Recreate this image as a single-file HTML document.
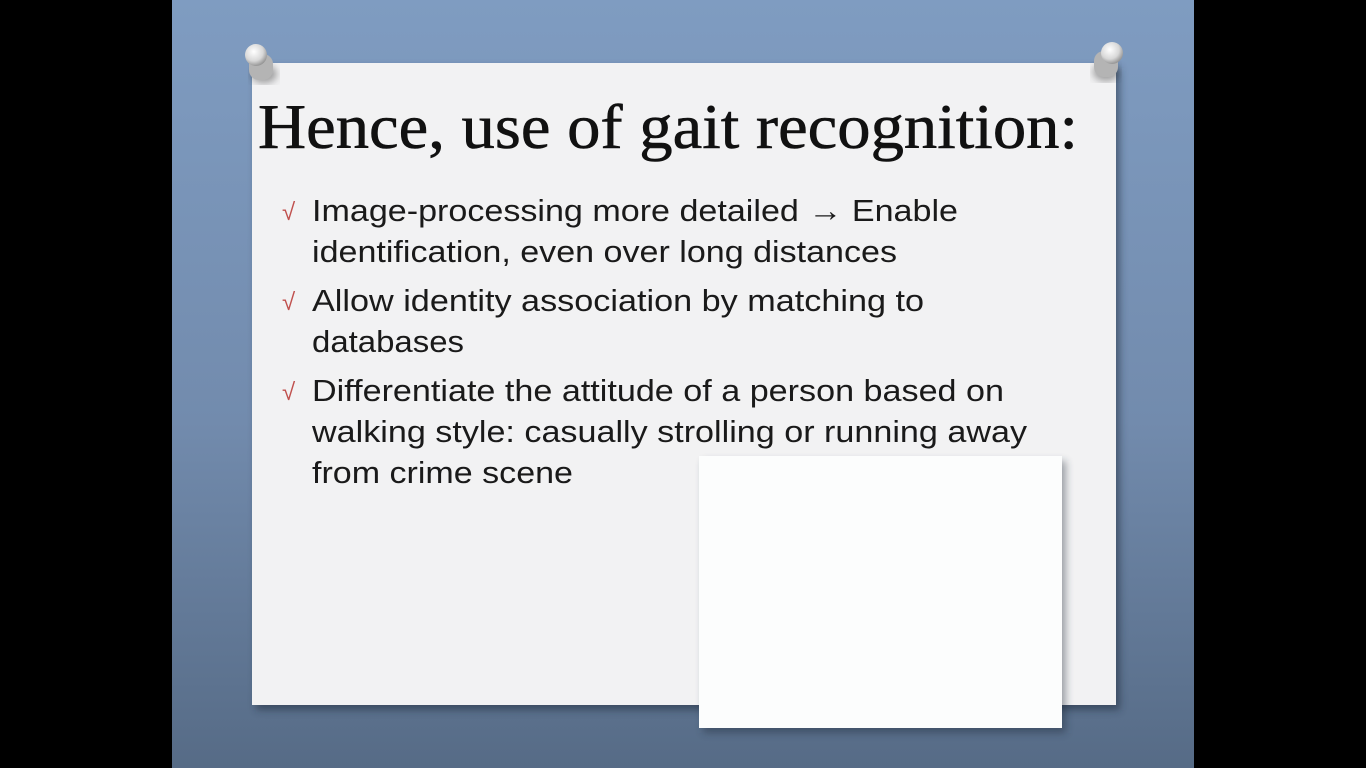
<!DOCTYPE html>
<html><head><meta charset="utf-8"><style>
html,body{margin:0;padding:0;background:#000;width:1366px;height:768px;overflow:hidden}
</style></head><body>
<svg width="1366" height="768" xmlns="http://www.w3.org/2000/svg" style="position:absolute;left:0;top:0">
<defs>
<linearGradient id="bg" x1="0" y1="0" x2="0" y2="1">
<stop offset="0" stop-color="#7f9cc1"/><stop offset="0.55" stop-color="#728bad"/><stop offset="1" stop-color="#566b86"/>
</linearGradient>
<filter id="sh" x="-10%" y="-10%" width="120%" height="120%"><feGaussianBlur stdDeviation="4"/></filter>
<radialGradient id="pin" cx="0.4" cy="0.35" r="0.7"><stop offset="0" stop-color="#ffffff"/><stop offset="0.6" stop-color="#d8d8d8"/><stop offset="1" stop-color="#8a8a8a"/></radialGradient>
</defs>
<rect x="172" y="0" width="1022" height="768" fill="url(#bg)"/>
<rect x="256" y="68" width="864" height="642" fill="#1a2535" opacity="0.5" filter="url(#sh)"/>
<rect x="252" y="63" width="864" height="642" fill="#f2f2f3"/>
<rect x="703" y="461" width="363" height="272" fill="#1a2535" opacity="0.4" filter="url(#sh)"/>
<rect x="699" y="456" width="363" height="272" fill="#fcfdfd"/>
<g>
<ellipse cx="264" cy="74" rx="13" ry="9" fill="#333" opacity="0.45" filter="url(#sh)"/>
<rect x="249" y="54" width="24" height="26" rx="10" fill="#b4b4b4"/>
<circle cx="256" cy="55" r="11" fill="url(#pin)"/>
<ellipse cx="1106" cy="72" rx="13" ry="9" fill="#333" opacity="0.45" filter="url(#sh)"/>
<rect x="1094" y="51" width="24" height="26" rx="10" fill="#b4b4b4"/>
<circle cx="1112" cy="53" r="11" fill="url(#pin)"/>
</g>
<text x="258" y="148" font-family="Liberation Serif, serif" font-size="64" fill="#111" stroke="#111" stroke-width="0.6" textLength="820" lengthAdjust="spacingAndGlyphs">Hence, use of gait recognition:</text>
<g font-family="Liberation Sans, sans-serif" font-size="31" fill="#1a1a1a">
<text x="282" y="220" fill="#c0504d" font-size="24">√</text>
<text x="282" y="310" fill="#c0504d" font-size="24">√</text>
<text x="282" y="400" fill="#c0504d" font-size="24">√</text>
<text x="312" y="221" textLength="646" lengthAdjust="spacingAndGlyphs">Image-processing more detailed <tspan font-weight="bold">→</tspan> Enable</text>
<text x="312" y="262" textLength="585" lengthAdjust="spacingAndGlyphs">identification, even over long distances</text>
<text x="312" y="311" textLength="612" lengthAdjust="spacingAndGlyphs">Allow identity association by matching to</text>
<text x="312" y="352" textLength="152" lengthAdjust="spacingAndGlyphs">databases</text>
<text x="312" y="401" textLength="692" lengthAdjust="spacingAndGlyphs">Differentiate the attitude of a person based on</text>
<text x="312" y="442" textLength="715" lengthAdjust="spacingAndGlyphs">walking style: casually strolling or running away</text>
<text x="312" y="483" textLength="261" lengthAdjust="spacingAndGlyphs">from crime scene</text>
</g>
</svg>
</body></html>
